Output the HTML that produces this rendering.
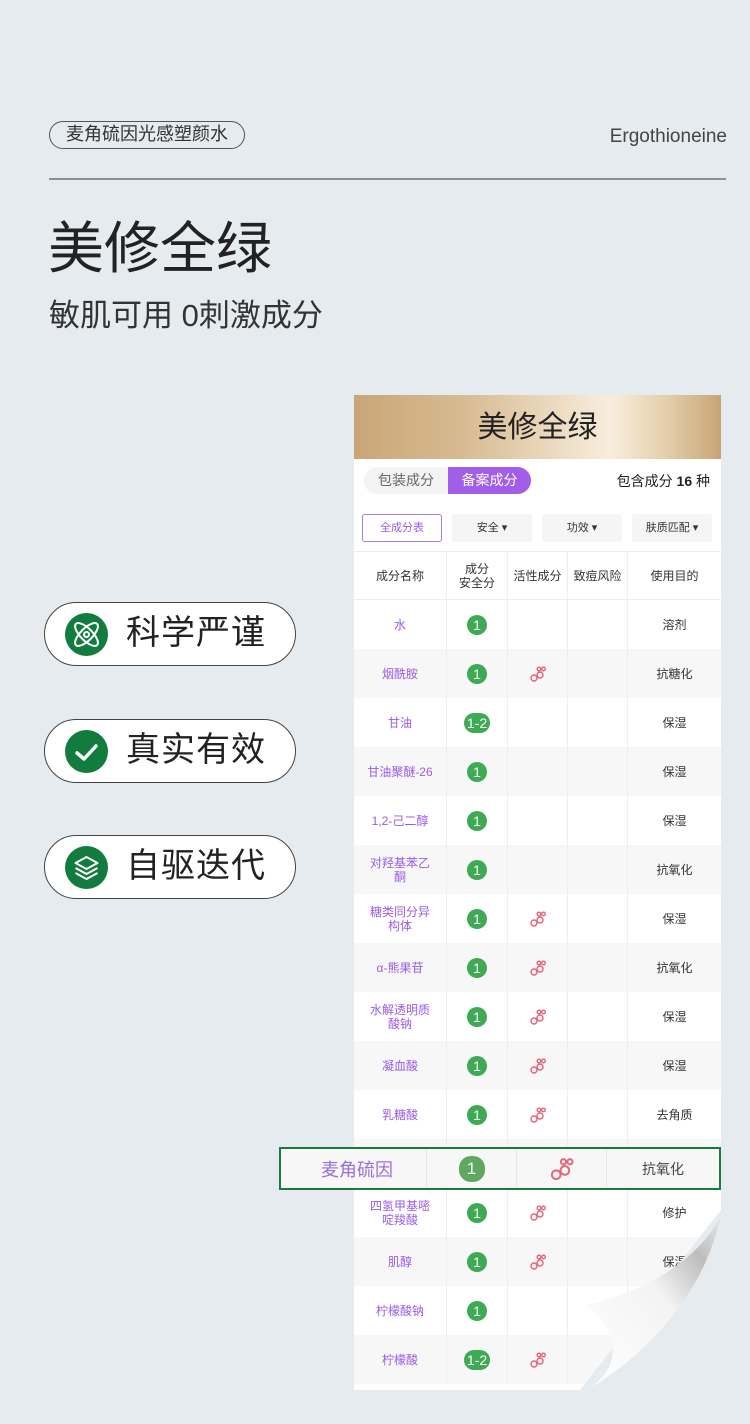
<!DOCTYPE html>
<html><head><meta charset="utf-8"><style>
*{margin:0;padding:0;box-sizing:border-box}
body{width:750px;height:1424px;background:#e6ebef;font-family:"Liberation Sans","Noto Sans CJK SC",sans-serif;position:relative;overflow:hidden;color:#333}
.abs{position:absolute}
.tag{left:49px;top:121px;width:196px;height:28px;border:1.3px solid #555;border-radius:14px;font-size:18px;line-height:25px;text-align:center;color:#333}
.pill{left:44px;width:252px;height:64px;border:1.3px solid #444;border-radius:32px;background:#fff}
.pill .ic{position:absolute;left:20px;top:10px;width:43px;height:43px;border-radius:50%;background:#127c3e}
.pill .tx{position:absolute;left:81px;top:8px;font-size:34px;line-height:44px;color:#222;letter-spacing:1px}
.card{left:354px;top:395px;width:367px;height:995px;background:#fff;overflow:hidden}
.gold{height:64px;background:linear-gradient(90deg,#c9a677 0%,#d8bb92 30%,#f8eedd 70%,#e4cfab 85%,#c7a476 100%);text-align:center;font-size:30px;line-height:66px;color:#222}
.row{position:absolute;left:0;width:367px;height:49px;display:flex;font-size:12px;align-items:center}
.row div{height:100%;display:flex;align-items:center;justify-content:center;text-align:center;border-right:1px solid #eee;line-height:14px}
.c1{width:93px;color:#9b5ce6}.c2{width:61px}.c3{width:60px}.c4{width:60px}.c5{width:93px;border-right:none!important;color:#333}
.b{background:#3faa54;color:#fff;border-radius:10px;height:20px;min-width:20px;padding:0 3px;font-size:14px;line-height:20px;display:inline-block}
.g{background:#f7f7f7}
</style></head><body>
<div class="abs tag">麦角硫因光感塑颜水</div>
<div class="abs" style="right:23px;top:126px;font-size:19px;color:#444">Ergothioneine</div>
<div class="abs" style="left:49px;top:178px;width:677px;height:2px;background:#8d9093"></div>
<div class="abs" style="left:48px;top:216px;font-size:56px;line-height:66px;color:#222">美修全绿</div>
<div class="abs" style="left:49px;top:296px;font-size:31px;line-height:40px;color:#333">敏肌可用 0刺激成分</div>

<div class="abs pill" style="top:602px"><div class="ic"><svg width="43" height="43" viewBox="0 0 43 43" fill="none" stroke="#fff" stroke-width="2"><ellipse cx="21.5" cy="21.5" rx="15" ry="6" transform="rotate(45 21.5 21.5)"/><ellipse cx="21.5" cy="21.5" rx="15" ry="6" transform="rotate(-45 21.5 21.5)"/><circle cx="21.5" cy="21.5" r="2.5"/></svg></div><div class="tx">科学严谨</div></div>
<div class="abs pill" style="top:719px"><div class="ic"><svg width="43" height="43" viewBox="0 0 43 43" fill="none" stroke="#fff" stroke-width="3.5" stroke-linecap="round" stroke-linejoin="round"><path d="M12 23l7 6 12-13"/></svg></div><div class="tx">真实有效</div></div>
<div class="abs pill" style="top:835px"><div class="ic"><svg width="43" height="43" viewBox="0 0 43 43" fill="none" stroke="#fff" stroke-width="2" stroke-linejoin="round"><path d="M21.5 11l11 6-11 6-11-6z"/><path d="M10.5 22l11 6 11-6"/><path d="M10.5 27l11 6 11-6"/></svg></div><div class="tx">自驱迭代</div></div>

<div class="abs card">
<div class="gold">美修全绿</div>
<div class="abs" style="left:10px;top:72px;width:167px;height:27px;border-radius:14px;background:#f3f3f3;font-size:14px;line-height:27px;color:#666"><span style="padding-left:14px">包装成分</span></div>
<div class="abs" style="left:94px;top:72px;width:83px;height:27px;border-radius:0 14px 14px 0;background:#a35ee8;color:#fff;font-size:14px;line-height:27px;text-align:center">备案成分</div>
<div class="abs" style="right:11px;top:76px;font-size:14px;color:#222">包含成分 <b>16</b> 种</div>
<div class="abs" style="left:8px;top:119px;width:80px;height:28px;border:1px solid #a37de8;border-radius:3px;font-size:11px;line-height:26px;text-align:center;color:#9b5ce6">全成分表</div>
<div class="abs" style="left:98px;top:119px;width:80px;height:28px;background:#f5f5f5;border-radius:3px;font-size:11px;line-height:28px;text-align:center">安全 ▾</div>
<div class="abs" style="left:188px;top:119px;width:80px;height:28px;background:#f5f5f5;border-radius:3px;font-size:11px;line-height:28px;text-align:center">功效 ▾</div>
<div class="abs" style="left:278px;top:119px;width:80px;height:28px;background:#f5f5f5;border-radius:3px;font-size:11px;line-height:28px;text-align:center">肤质匹配 ▾</div>
<div class="row" style="top:156px;border-top:1px solid #eee;border-bottom:1px solid #eee;color:#333"><div class="c1" style="color:#333">成分名称</div><div class="c2">成分<br>安全分</div><div class="c3">活性成分</div><div class="c4">致痘风险</div><div class="c5">使用目的</div></div>
<div id="rows"></div>
</div>
<script>
var d=[["水","1",0,"溶剂"],["烟酰胺","1",1,"抗糖化"],["甘油","1-2",0,"保湿"],["甘油聚醚-26","1",0,"保湿"],["1,2-己二醇","1",0,"保湿"],["对羟基苯乙<br>酮","1",0,"抗氧化"],["糖类同分异<br>构体","1",1,"保湿"],["α-熊果苷","1",1,"抗氧化"],["水解透明质<br>酸钠","1",1,"保湿"],["凝血酸","1",1,"保湿"],["乳糖酸","1",1,"去角质"],["麦角硫因","1",1,"抗氧化"],["四氢甲基嘧<br>啶羧酸","1",1,"修护"],["肌醇","1",1,"保湿"],["柠檬酸钠","1",0,""],["柠檬酸","1-2",1,""]];
var ic='<svg width="18" height="18" viewBox="0 0 18 18" fill="none" stroke="#e8607a" stroke-width="1.4"><circle cx="5" cy="13" r="3"/><circle cx="11" cy="10" r="3"/><circle cx="10" cy="4" r="1.8"/><circle cx="14.5" cy="4" r="1.8"/></svg>';
var h='';d.forEach(function(r,i){h+='<div class="row'+(i%2?' g':'')+'" style="top:'+(205+i*49)+'px"><div class="c1">'+r[0]+'</div><div class="c2"><span class="b">'+r[1]+'</span></div><div class="c3">'+(r[2]?ic:'')+'</div><div class="c4"></div><div class="c5">'+r[3]+'</div></div>';});
document.getElementById('rows').outerHTML=h;
</script>
<div class="abs" style="left:279px;top:1147px;width:442px;height:43px;border:2px solid #1a7a3d;background:#f7f7f7;display:flex;align-items:center">
<div style="width:145px;font-size:18px;color:#9b6fd8;padding-left:40px">麦角硫因</div>
<div style="width:90px;text-align:center;border-left:1px solid #e6e6e6;height:100%;display:flex;align-items:center;justify-content:center"><span style="background:#5ea85f;color:#fff;border-radius:12px;width:26px;height:26px;line-height:26px;text-align:center;font-size:17px">1</span></div>
<div style="width:90px;border-left:1px solid #e6e6e6;height:100%;display:flex;align-items:center;justify-content:center"><svg width="26" height="26" viewBox="0 0 18 18" fill="none" stroke="#e06a80" stroke-width="1.4"><circle cx="5" cy="13" r="3"/><circle cx="11" cy="10" r="3"/><circle cx="10" cy="4" r="1.8"/><circle cx="14.5" cy="4" r="1.8"/></svg></div>
<div style="flex:1;border-left:1px solid #e6e6e6;height:100%;display:flex;align-items:center;justify-content:center;font-size:14px;color:#444">抗氧化</div>
</div>
<svg class="abs" style="left:560px;top:1210px" width="165" height="185" viewBox="0 0 165 185">
<defs><linearGradient id="cg" x1="0" y1="1" x2="1" y2="0"><stop offset="0" stop-color="#fff"/><stop offset="0.55" stop-color="#f3f3f3"/><stop offset="0.8" stop-color="#bdbdbd"/><stop offset="1" stop-color="#e9e9e9"/></linearGradient></defs>
<polygon points="161,0 165,0 165,185 20,185 20,180" fill="#e6ebef"/>
<path d="M161,5 C150,60 110,130 30,178 C70,150 50,110 25,95 C80,85 140,50 161,5 Z" fill="url(#cg)"/>
</svg>
</body></html>
